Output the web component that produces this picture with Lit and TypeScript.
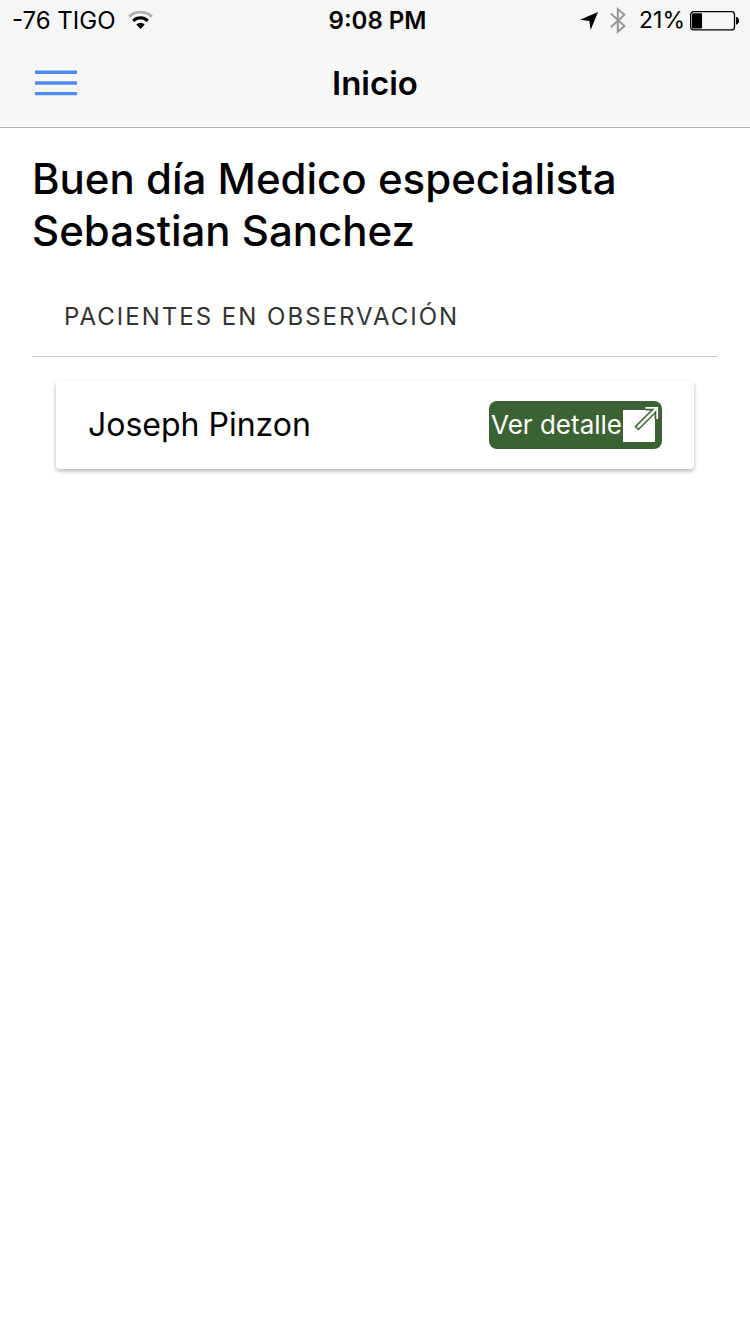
import { LitElement, html, css } from "lit";
import { customElement, property } from "lit/decorators.js";

@customElement("status-bar")
class StatusBar extends LitElement {
  @property() carrier = "";
  @property() time = "";
  @property({ type: Number }) battery = 0;

  static styles = css`
    :host {
      display: grid;
      grid-template-columns: 1fr auto 1fr;
      align-items: center;
      height: 41px;
      padding: 0 11px 0 12px;
      background: #f6f6f6;
      font-size: 24px;
      line-height: 41px;
      color: #000;
    }
    .side {
      display: flex;
      align-items: center;
      gap: 12px;
    }
    .end {
      justify-content: flex-end;
    }
    .time {
      font-weight: 600;
      padding-left: 4px;
    }
    .power {
      display: flex;
      align-items: center;
      gap: 5px;
      padding-left: 1px;
      font-size: 23px;
    }
    svg {
      display: block;
    }
  `;

  render() {
    return html`
      <div class="side">
        <span>${this.carrier}</span>
        <svg width="25" height="19" viewBox="0 0 25 19" aria-label="Wi-Fi">
          <path d="M1.2 5.6A16.5 16.5 0 0 1 23.8 5.6" fill="none" stroke="#b0b0b0" stroke-width="3" />
          <path d="M5.2 9.8A10.5 10.5 0 0 1 19.8 9.8" fill="none" stroke="#000" stroke-width="3" />
          <path d="M8.3 13.4A6.2 6.2 0 0 1 16.7 13.4L12.5 18Z" fill="#000" />
        </svg>
      </div>
      <div class="time">${this.time}</div>
      <div class="side end">
        <svg width="18" height="18" viewBox="0 0 18 18" aria-label="Ubicación">
          <path d="M18 0L10.6 18L9.4 8.9L0 7.8Z" fill="#000" />
        </svg>
        <svg width="16" height="27" viewBox="0 0 16 27" aria-label="Bluetooth">
          <path d="M0.8 6.6L14.4 19L7.8 24.8V2.2L14.4 7.8L0.8 20.2" fill="none" stroke="#989898" stroke-width="2" />
        </svg>
        <div class="power">
          <span>${this.battery}%</span>
          <svg width="49" height="20" viewBox="0 0 49 20" aria-label="Batería">
            <rect x="0.7" y="0.7" width="43.8" height="18.2" rx="3" fill="none" stroke="#000" stroke-width="1.3" />
            <rect x="2" y="2.2" width=${(this.battery * 48) / 100} height="15.2" rx="1.2" fill="#000" />
            <path d="M46 6H47Q49 7 49 9.8T47 13.6H46Z" fill="#000" />
          </svg>
        </div>
      </div>
    `;
  }
}

@customElement("nav-header")
class NavHeader extends LitElement {
  @property() heading = "";

  static styles = css`
    :host {
      display: grid;
      grid-template-columns: 1fr auto 1fr;
      align-items: center;
      height: 84px;
      padding: 0 35px 2px;
      background: #f8f8f8;
      border-bottom: 1px solid #b2b2b2;
    }
    .menu {
      justify-self: start;
      padding: 0;
      border: 0;
      background: none;
      cursor: pointer;
    }
    .menu svg {
      display: block;
    }
    h1 {
      margin: 0;
      font-size: 33px;
      line-height: 40px;
      font-weight: 600;
    }
  `;

  render() {
    return html`
      <button class="menu" aria-label="Menú">
        <svg width="42" height="26" viewBox="0 0 42 26">
          <path d="M0 2.3H42M0 13H42M0 23.6H42" stroke="#4e8aef" stroke-width="3.4" />
        </svg>
      </button>
      <h1>${this.heading}</h1>
    `;
  }
}

@customElement("patient-card")
class PatientCard extends LitElement {
  @property() name = "";

  static styles = css`
    :host {
      display: flex;
      align-items: center;
      justify-content: space-between;
      margin: 24px;
      padding: 20px 32px;
      border-radius: 4px;
      background: #fff;
      box-shadow: 0 2px 4px rgba(0, 0, 0, 0.3);
    }
    .name {
      font-size: 32px;
      line-height: 48px;
    }
    .detail {
      display: flex;
      align-items: center;
      height: 48px;
      padding: 0 2px;
      border: 0;
      border-radius: 8px;
      background: #3b6233;
      color: #fff;
      font: inherit;
      font-size: 26px;
      line-height: 48px;
      cursor: pointer;
    }
    .detail svg {
      display: block;
    }
  `;

  render() {
    return html`
      <span class="name">${this.name}</span>
      <button class="detail">
        Ver detalle
        <svg width="38" height="38" viewBox="0 0 38 38" aria-hidden="true">
          <path d="M1 4H33V36H1Z" fill="#fff" />
          <path d="M14.4 22.6L34 3" stroke="#3b6233" stroke-width="5.6" />
          <path d="M15.4 21.6L35 2" stroke="#fff" stroke-width="2.6" />
          <path d="M24 2.2H34.8V13" fill="none" stroke="#3b6233" stroke-width="4.4" />
          <path d="M23.5 1.8H35.2V13" fill="none" stroke="#fff" stroke-width="1.8" />
          <path d="M29 8L35 2" stroke="#fff" stroke-width="2.4" />
        </svg>
      </button>
    `;
  }
}

@customElement("app-root")
class AppRoot extends LitElement {
  @property({ attribute: false }) patients = ["Joseph Pinzon"];

  static styles = css`
    :host {
      display: block;
      min-height: 100vh;
      background: #fff;
      color: #000;
      font-family: Inter, "Liberation Sans", sans-serif;
    }
    main {
      padding: 25px 32px;
    }
    h2 {
      margin: 0;
      font-size: 42px;
      line-height: 52px;
      font-weight: 500;
    }
    h3 {
      margin: 21px 0 0;
      padding: 0 32px;
      border-bottom: 1px solid #c8c7cc;
      color: #333;
      font-size: 24px;
      line-height: 78px;
      font-weight: 400;
      letter-spacing: 2px;
      text-transform: uppercase;
    }
  `;

  render() {
    return html`
      <header>
        <status-bar carrier="-76 TIGO" time="9:08 PM" battery="21"></status-bar>
        <nav-header heading="Inicio"></nav-header>
      </header>
      <main>
        <h2>Buen día Medico especialista<br />Sebastian Sanchez</h2>
        <section>
          <h3>Pacientes en observación</h3>
          ${this.patients.map((name) => html`<patient-card .name=${name}></patient-card>`)}
        </section>
      </main>
    `;
  }
}
